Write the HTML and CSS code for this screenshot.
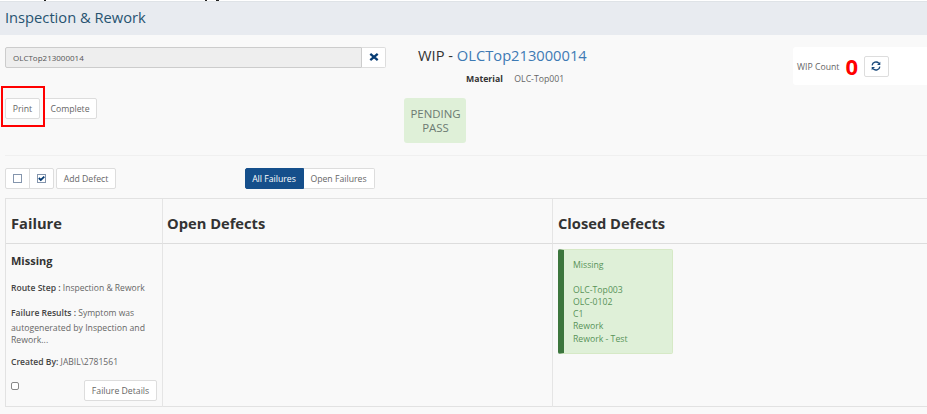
FILE: index.html
```html
<!DOCTYPE html>
<html lang="en">
<head>
<meta charset="utf-8">
<title>Inspection &amp; Rework</title>
<link rel="stylesheet" href="styles.css">
</head>
<body>
<div class="strip"><i class="stem"></i><i class="stem second"></i><i class="tail"></i></div>
<header class="page-head"><h1>Inspection &amp; Rework</h1></header>
<main>
  <section class="summary">
    <div class="left">
      <div class="search"><div class="field">OLCTop213000014</div><button class="btn clear" aria-label="Clear"><svg width="10" height="10" viewBox="0 0 10 10"><path d="M1.3 1.8 8.7 8.2M8.7 1.8 1.3 8.2" stroke="#073c73" stroke-width="2.3"/></svg></button></div>
      <div class="actions"><button class="btn print">Print</button><button class="btn complete">Complete</button><span class="highlight"></span></div>
    </div>
    <div class="wip">
      <h2>WIP - <a>OLCTop213000014</a></h2>
      <div class="material"><b>Material</b><span>OLC-Top001</span></div>
      <div class="status">PENDING<br>PASS</div>
    </div>
    <div class="count"><span class="count-label">WIP Count</span><strong>0</strong><button class="btn refresh" aria-label="Refresh"><svg width="10" height="10" viewBox="0 0 10 10"><path d="M1.1 4.4A4 4 0 0 1 7.9 2.2M8.9 5.6A4 4 0 0 1 2.1 7.8" fill="none" stroke="#174779" stroke-width="1.3"/><path d="M9.3.7V4H6ZM.7 9.3V6H4Z" fill="#174779"/></svg></button></div>
  </section>
  <section class="toolbar">
    <div class="group checks">
      <button class="btn" aria-label="Clear all"><svg width="9" height="9" viewBox="0 0 9 9"><rect x=".5" y=".5" width="8" height="8" fill="#fff" stroke="#8495ad"/></svg></button>
      <button class="btn" aria-label="Select all"><svg width="9" height="9" viewBox="0 0 9 9"><rect x=".5" y=".5" width="8" height="8" fill="#fff" stroke="#8495ad"/><path d="m1.8 4 2 2L7.3 2.6" fill="none" stroke="#073c73" stroke-width="1.8"/></svg></button>
    </div>
    <button class="btn add">Add Defect</button>
    <div class="group filter"><button class="btn active">All Failures</button><button class="btn open">Open Failures</button></div>
  </section>
  <section class="board">
    <h3>Failure</h3><h3>Open Defects</h3><h3>Closed Defects</h3>
    <div class="cell failure">
      <h4>Missing</h4>
      <p class="route"><b>Route Step :</b> Inspection &amp; Rework</p>
      <p class="results"><b>Failure Results :</b> Symptom was</p>
      <p class="more">autogenerated by Inspection and<br>Rework...</p>
      <p class="created"><b>Created By:</b> JABIL\2781561</p>
      <div class="foot"><span class="box"></span><button class="btn details">Failure Details</button></div>
    </div>
    <div class="cell"></div>
    <div class="cell"><div class="defect">Missing<br><br>OLC-Top003<br>OLC-0102<br>C1<br>Rework<br>Rework - Test</div></div>
  </section>
</main>
</body>
</html>
```
FILE: styles.css
```css
* { box-sizing: border-box; }
body { margin: 0; height: 414px; overflow: hidden; background: #f9f9f9; color: #666; font: 8.7px/12px "Open Sans", sans-serif; }
h1, h2, h3, h4, p { margin: 0; }
b { color: #444; font-weight: 600; }
.strip { height: 1px; background: #fff; display: flex; }
.stem { width: 2px; height: 1px; background: #222; margin-left: 44px; }
.second { margin-left: 159px; }
.tail { width: 3px; height: 1px; background: #222; margin-left: 9px; }
.page-head { height: 34px; background: #e8ebf0; border-top: 1px solid #dfe3e7; padding-left: 5px; }
h1 { font-size: 14.7px; line-height: 31px; font-weight: 400; color: #275370; white-space: nowrap; }
.btn { font: inherit; color: #666; background: #fff; border: 1px solid #ddd; border-radius: 2px; height: 21px; padding: 0; display: flex; align-items: center; justify-content: center; white-space: nowrap; }
main { padding-left: 5px; }
.summary { height: 121px; display: flex; border-bottom: 1px solid #f0f0f0; }
.left { width: 399px; padding-top: 12px; }
.search { display: flex; width: 381px; }
.field { flex: 1; height: 21px; border: 1px solid #ccc; background: #eee; border-radius: 2px 0 0 2px; padding-left: 7px; line-height: 19px; font-size: 8px; color: #555; }
.clear { width: 24px; border-left: 0; border-radius: 0 2px 2px 0; padding-bottom: 2px; }
.actions { display: flex; position: relative; margin-top: 30px; gap: 3px; }
.print { width: 35px; }
.complete { width: 54px; }
.highlight { position: absolute; left: -4px; top: -12px; width: 44px; height: 41px; border: 2px solid #f00; }
.wip { width: 389px; padding-top: 10px; }
h2 { font-size: 14.7px; line-height: 20px; font-weight: 400; color: #333; padding-left: 14px; }
h2 a { color: #3e7ab4; }
.material { display: flex; padding: 8px 0 0 62px; gap: 11.5px; }
.material b { color: #333; font-weight: 700; }
.status { width: 62px; height: 45px; margin-top: 13px; border-radius: 3px; background: #dff0d8; text-align: center; font-size: 11.4px; line-height: 13.5px; padding: 9px 0 0 1px; color: #6c7a72; }
.count { flex: 1; height: 38px; margin-top: 12px; background: #fff; border-radius: 3px 0 0 3px; display: flex; align-items: center; padding-left: 4px; }
.count-label { padding-top: 1px; }
.count strong { color: red; font-size: 22px; line-height: 24px; margin-left: 6px; width: 13px; }
.refresh { width: 25px; margin-left: 5.5px; }
.toolbar { display: flex; padding-top: 12px; height: 42px; }
.group { display: flex; }
.checks .btn { width: 25px; border-radius: 2px 0 0 2px; }
.checks .btn + .btn { margin-left: -1px; border-radius: 0 2px 2px 0; }
.add { width: 60px; margin-left: 2px; }
.filter { margin-left: 128.5px; }
.active { width: 59px; background: #154f8b; border-color: #154f8b; color: #fff; border-radius: 2px 0 0 2px; }
.open { width: 71px; border-left: 0; border-radius: 0 2px 2px 0; }
.board { height: 209px; display: grid; grid-template-columns: 157px 390px 1fr; grid-template-rows: 45px 163px; border: 1px solid #e2e2e2; border-right: 0; }
h3 { font-size: 14.7px; line-height: 20px; font-weight: 700; color: #333; padding: 14px 0 0 4px; border-bottom: 1px solid #ddd; border-right: 1px solid #e5e5e5; }
h3:first-child, h3:nth-of-type(3) { padding-left: 5px; }
.cell { padding: 5px; border-right: 1px solid #e5e5e5; }
h3:nth-of-type(3), .cell:last-child { border-right: 0; }
h4 { font-size: 11px; line-height: 14px; color: #333; padding-top: 5px; height: 19px; }
.failure p { white-space: nowrap; font-size: 8.55px; }
.route { margin-top: 14px; }
.results { margin-top: 13px; }
.failure .more { margin-top: 3px; font-size: 8.7px; }
.failure .created { margin-top: 10px; }
.foot { display: flex; justify-content: space-between; margin-top: 12px; }
.box { width: 8px; height: 8px; border: 1px solid #888; border-radius: 2px; background: #fff; margin-top: 2px; }
.details { width: 73px; }
.defect { width: 115px; height: 105px; border: 1px solid #d6e9c6; border-left: 6px solid #3c763d; border-radius: 2px; background: #dff0d8; color: #589359; padding: 9px 0 0 9px; line-height: 12.3px; }
```
